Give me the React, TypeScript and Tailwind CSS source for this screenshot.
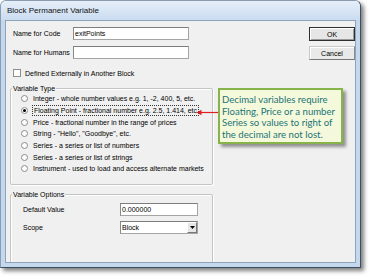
import React from "react";

const radios = [
  "Integer - whole number values e.g. 1, -2, 400, 5, etc.",
  "Floating Point - fractional number e.g. 2.5, 1.414, etc",
  "Price - fractional number in the range of prices",
  "String - \"Hello\", \"Goodbye\", etc.",
  "Series - a series or list of numbers",
  "Series - a series or list of strings",
  "Instrument - used to load and access alternate markets",
];

function Input({ value, w }: { value?: string; w: string }) {
  return (
    <div
      className={`${w} h-[13px] bg-white border border-[#a5a5a5] border-t-[#7d7d7d] border-l-[#8a8a8a] flex items-center pl-[1px] text-[7px] leading-none text-black`}
    >
      {value}
    </div>
  );
}

export default function App() {
  return (
    <div className="w-[370px] h-[278px] bg-white overflow-hidden font-['Liberation_Sans',sans-serif] text-black">
      <div className="w-[361px] h-[268px] flex flex-col rounded-t-[6px] border border-[#3d4e60] border-t-[#8a9bb0] border-l-[#8c9db0] bg-[#c3d7ed] shadow-[3px_3px_4px_rgba(0,0,0,0.5)]">
        <div className="h-[19px] shrink-0 flex items-center pl-[6px] rounded-t-[5px] bg-gradient-to-b from-[#e6eff9] to-[#cadcf0] text-[8px] text-[#111]">
          Block Permanent Variable
        </div>
        <div className="flex-1 flex px-[4px] pb-[4px] min-h-0">
          <div className="flex-1 relative border border-[#8fa4ba] bg-[#f0f0f0] overflow-hidden flex flex-col pt-[6px] text-[7px] leading-none">
            {/* top rows */}
            <div className="flex">
              <div className="flex flex-col gap-[6px] pl-[7px]">
                <div className="flex items-center h-[13px]">
                  <span className="w-[60px]">Name for Code</span>
                  <Input value="exitPoints" w="w-[116px]" />
                </div>
                <div className="flex items-center h-[13px]">
                  <span className="w-[60px]">Name for Humans</span>
                  <Input w="w-[116px]" />
                </div>
              </div>
              <div className="ml-auto flex flex-col gap-[5px] w-[46px]">
                <div className="h-[14px] border border-[#2e2e2e] bg-[#e6e6e6] flex items-center justify-center shadow-[inset_1px_1px_0_#fff,inset_-1px_-1px_0_#9a9a9a]">
                  OK
                </div>
                <div className="h-[14px] border border-[#c9c9c9] border-b-[#777] border-r-[#8a8a8a] bg-[#e9e9e9] flex items-center justify-center shadow-[inset_1px_1px_0_#fff]">
                  Cancel
                </div>
              </div>
            </div>
            {/* checkbox */}
            <div className="flex items-center mt-[9px] pl-[7px] h-[8px]">
              <div className="w-[8px] h-[8px] border border-[#8e8f8f] bg-white" />
              <span className="ml-[4px]">Defined Externally in Another Block</span>
            </div>
            {/* Variable Type group */}
            <div className="relative mt-[11px] ml-[4px] w-[203px] h-[97px] shrink-0 border border-[#c4c4c4] rounded-[2px] shadow-[inset_1px_1px_0_#fff,1px_1px_0_#fff]">
              <span className="absolute left-[1px] -top-[4px] bg-[#f0f0f0] px-[1px]">Variable Type</span>
              <div className="flex flex-col pt-[4px] pl-[10px]">
                {radios.map((r, i) => (
                  <div key={i} className="flex items-center h-[11.7px]">
                    <div className="w-[7px] h-[7px] rounded-full border border-[#8c8c8c] bg-white flex items-center justify-center">
                      {i === 1 && <div className="w-[3px] h-[3px] rounded-full bg-black" />}
                    </div>
                    <span
                      className={
                        i === 1
                          ? "ml-[4px] border border-dotted border-[#333] px-[1px] py-[1px]"
                          : "ml-[5px]"
                      }
                    >
                      {r}
                    </span>
                  </div>
                ))}
              </div>
            </div>
            {/* Variable Options group */}
            <div className="relative mt-[9px] ml-[4px] w-[203px] h-[90px] shrink-0 border border-[#c4c4c4] rounded-[2px] shadow-[inset_1px_1px_0_#fff,1px_1px_0_#fff]">
              <span className="absolute left-[1px] -top-[4px] bg-[#f0f0f0] px-[1px]">Variable Options</span>
              <div className="flex flex-col gap-[5px] pt-[8px] pl-[12px]">
                <div className="flex items-center h-[13px]">
                  <span className="w-[97px]">Default Value</span>
                  <Input value="0.000000" w="w-[78px]" />
                </div>
                <div className="flex items-center h-[13px]">
                  <span className="w-[97px]">Scope</span>
                  <div className="w-[78px] h-[13px] bg-white border border-[#a5a5a5] border-t-[#7d7d7d] border-l-[#8a8a8a] flex items-center pl-[1px]">
                    <span className="flex-1">Block</span>
                    <div className="w-[10px] h-[11px] bg-[#e6e6e6] border border-[#fff] border-b-[#777] border-r-[#777] flex items-center justify-center">
                      <svg width="5" height="3" viewBox="0 0 5 3">
                        <path d="M0 0H5L2.5 3Z" fill="#000" />
                      </svg>
                    </div>
                  </div>
                </div>
              </div>
            </div>

            {/* arrow */}
            <svg className="absolute left-[190px] top-[88px]" width="23" height="7" viewBox="0 0 23 7">
              <line x1="4" y1="3.5" x2="22" y2="3.5" stroke="#e02020" strokeWidth="1.2" />
              <path d="M0.5 3.5L5.5 0.8V6.2Z" fill="#e02020" />
            </svg>
            {/* callout */}
            <div className="absolute left-[212px] top-[67px] w-[125px] h-[56px] bg-[#f5f9dc] border-[2px] border-[#86b34a] shadow-[3px_3px_3px_rgba(0,0,0,0.4)] pl-[2px] pt-[4px] font-['Lato',sans-serif] text-[9.6px] leading-[11.7px] text-[#237475]">
              Decimal variables require
              <br />
              Floating, Price or a number
              <br />
              Series so values to right of
              <br />
              the decimal are not lost.
            </div>
          </div>
        </div>
      </div>
    </div>
  );
}
